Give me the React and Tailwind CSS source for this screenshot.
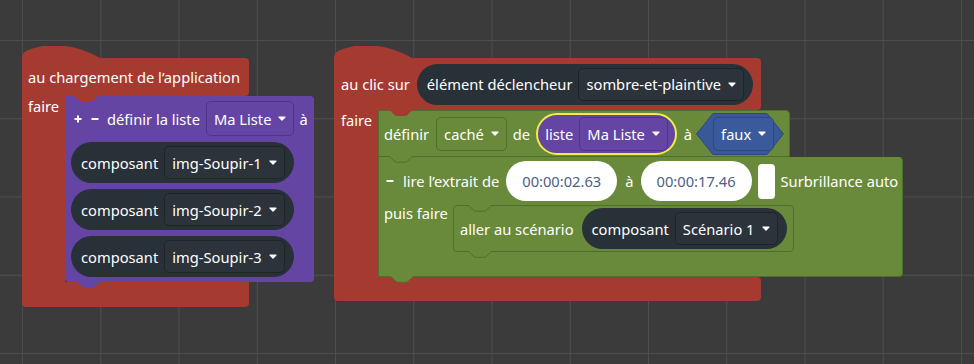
const FONT = "font-['Noto_Sans',sans-serif]";

function Arrow({ className = "" }) {
  return (
    <svg width="8" height="5" viewBox="0 0 8 5" className={`shrink-0 ${className}`}>
      <path d="M1 1h6L4 4.2z" fill="#fff" stroke="#fff" strokeWidth="1.2" strokeLinejoin="round" />
    </svg>
  );
}

const TONES = {
  pill: "bg-[#2c333a] border-[#1e2428]",
  purple: "bg-[#6445a4] border-[#4e3489]",
  green: "bg-[#688a3a] border-[#506e2b]",
  blue: "bg-[#3a5a9b] border-[#2b4882]",
};

function Dropdown({ label, tone = "pill", h = "h-[34px]", className = "" }) {
  return (
    <div className={`flex items-center ${h} pl-[7px] pr-[7px] rounded-[5px] border ${TONES[tone]} ${className}`}>
      <span>{label}</span>
      <Arrow className="ml-[7px]" />
    </div>
  );
}

// connection notch / tab, drawn over the block edge
function Notch({ fill, stroke, className = "" }) {
  return (
    <svg width="28" height="7" viewBox="0 0 28 7" className={`absolute z-10 ${className}`}>
      <path
        d="M0 0H28C25.5 0 24.5 0.8 23.5 1.8L20.7 4.8C19.8 5.7 18.8 6 17.5 6H10.5C9.2 6 8.2 5.7 7.3 4.8L4.5 1.8C3.5 0.8 2.5 0 0 0Z"
        fill={fill}
      />
      {stroke && (
        <path
          d="M0 0.5C2.5 0.5 3.5 1.2 4.5 2.2L7.3 5.1C8.2 6 9.2 6.3 10.5 6.3H17.5C18.8 6.3 19.8 6 20.7 5.1L23.5 2.2C24.5 1.2 25.5 0.5 28 0.5"
          fill="none"
          stroke={stroke}
          strokeWidth="1"
        />
      )}
    </svg>
  );
}

function Hat() {
  return (
    <svg width="78" height="12" viewBox="0 0 78 12" className="block">
      <path d="M0 12C0 8 2 6 4 5C24 -4 52 -3 78 12Z" fill="#a53a31" />
    </svg>
  );
}

function PlusIcon({ className = "" }) {
  return (
    <svg width="8" height="8" viewBox="0 0 8 8" className={`shrink-0 ${className}`}>
      <path d="M4 0.5V7.5M0.5 4H7.5" stroke="#fff" strokeWidth="2" />
    </svg>
  );
}

function MinusIcon({ className = "" }) {
  return (
    <svg width="8" height="8" viewBox="0 0 8 8" className={`shrink-0 ${className}`}>
      <path d="M0.5 4H7.5" stroke="#fff" strokeWidth="2" />
    </svg>
  );
}

function Pill({ label, value, className = "" }) {
  return (
    <div className={`h-[41px] flex items-center rounded-full bg-[#283038] pl-[10px] pr-[9px] whitespace-nowrap ${className}`}>
      <span>{label}</span>
      <Dropdown label={value} tone="pill" h="h-[33px]" className="ml-[6px]" />
    </div>
  );
}

function Oval({ children, className = "" }) {
  return (
    <div className={`h-[40px] flex items-center rounded-full bg-white px-[16px] text-[#4e6083] ${className}`}>
      {children}
    </div>
  );
}

function Hexagon({ className = "" }) {
  return (
    <div className={`relative w-[88px] h-[42px] flex items-center pl-[17px] ${className}`}>
      <svg className="absolute inset-0" width="88" height="42" viewBox="0 0 88 42">
        <polygon
          points="0.6,21 17,0.5 71,0.5 87.4,21 71,41.5 17,41.5"
          fill="#395898"
          stroke="#2b4882"
          strokeWidth="1"
          strokeLinejoin="round"
        />
      </svg>
      <Dropdown label="faux" tone="blue" className="relative" />
    </div>
  );
}

function LoadBlock() {
  return (
    <div className="absolute left-[22px] top-[46px] flex flex-col items-start">
      <Hat />
      <div className="w-[227px] h-[38px] bg-[#a53a31] rounded-tr-[4px] rounded-br-[4px] flex items-center pl-[6px] whitespace-nowrap">
        au chargement de l’application
      </div>
      <div className="flex">
        <div className="w-[43px] bg-[#a53a31] pl-[6px]">faire</div>
        <div className="relative bg-[#6445a4] rounded-tr-[4px] rounded-br-[4px] rounded-bl-[4px] pt-[5px] pb-[5px] pl-[6px] pr-[6px] flex flex-col items-start gap-[6px]">
          <Notch fill="#a53a31" className="left-[7px] top-0" />
          <div className="h-[35px] flex items-center whitespace-nowrap">
            <PlusIcon className="ml-[3px]" />
            <MinusIcon className="ml-[9px]" />
            <span className="ml-[8px]">définir la liste</span>
            <Dropdown label="Ma Liste" tone="purple" h="h-[35px]" className="ml-[6px]" />
            <span className="ml-[5px]">à</span>
          </div>
          <Pill label="composant" value="img-Soupir-1" />
          <Pill label="composant" value="img-Soupir-2" />
          <Pill label="composant" value="img-Soupir-3" />
          <Notch fill="#6445a4" className="left-[10px] top-full" />
        </div>
      </div>
      <div className="w-[227px] h-[25px] bg-[#a53a31] rounded-b-[4px]" />
    </div>
  );
}

function ClickBlock() {
  return (
    <div className="absolute left-[334px] top-[46px] flex flex-col items-start">
      <Hat />
      <div className="w-[427px] h-[52px] bg-[#a53a31] rounded-tr-[4px] rounded-br-[4px] flex items-center pl-[7px] whitespace-nowrap">
        <span>au clic sur</span>
        <Pill className="ml-[7px]" label="élément déclencheur" value="sombre-et-plaintive" />
      </div>
      <div className="flex">
        <div className="w-[44px] bg-[#a53a31] pl-[7px]">faire</div>
        <div className="flex flex-col items-start">
          {/* définir caché */}
          <div className="relative h-[47px] flex items-center pl-[5px] pr-[5px] bg-[#688a3a] border border-[#506e2b] rounded-tr-[4px] whitespace-nowrap">
            <Notch fill="#a53a31" className="left-[8px] -top-px" />
            <span>définir</span>
            <Dropdown label="caché" tone="green" className="ml-[7px]" />
            <span className="ml-[6px]">de</span>
            <div className="ml-[6px] h-[42px] flex items-center rounded-full border-2 border-[#f2ec48] bg-[#6445a4] pl-[7px] pr-[7px]">
              <span>liste</span>
              <Dropdown label="Ma Liste" tone="purple" className="ml-[6px]" />
            </div>
            <span className="ml-[7px]">à</span>
            <Hexagon className="ml-[4px]" />
            <Notch fill="#688a3a" stroke="#506e2b" className="left-[8px] top-full" />
          </div>

          {/* lire l'extrait */}
          <div className="relative w-[525px] flex flex-col bg-[#688a3a] border border-t-0 border-[#506e2b] rounded-tr-[4px] rounded-br-[4px]">
            <div className="h-[48px] flex items-center pl-[7px] whitespace-nowrap">
              <MinusIcon />
              <span className="ml-[9px]">lire l’extrait de</span>
              <Oval className="ml-[7px]">00:00:02.63</Oval>
              <span className="ml-[8px]">à</span>
              <Oval className="ml-[7px]">00:00:17.46</Oval>
              <div className="ml-[6px] w-[17px] h-[35px] rounded-[4px] bg-white" />
              <span className="ml-[6px]">Surbrillance auto</span>
            </div>
            <div className="flex">
              <div className="w-[74px] pl-[5px] leading-[16px] whitespace-nowrap">puis faire</div>
              <div className="relative h-[47px] flex items-center pl-[6px] pr-[6px] bg-[#688a3a] border border-[#506e2b] rounded-[4px] whitespace-nowrap">
                <Notch fill="#688a3a" stroke="#506e2b" className="left-[12px] -top-px" />
                <span>aller au scénario</span>
                <Pill className="ml-[8px]" label="composant" value="Scénario 1" />
                <Notch fill="#688a3a" stroke="#506e2b" className="left-[12px] top-full" />
              </div>
            </div>
            <div className="h-[24px]" />
            <Notch fill="#688a3a" stroke="#506e2b" className="left-[9px] top-full" />
          </div>
        </div>
      </div>
      <div className="w-[427px] h-[24px] bg-[#a53a31] rounded-b-[4px] rounded-tr-[4px]" />
    </div>
  );
}

export default function App() {
  return (
    <div
      className={`relative w-[974px] h-[364px] overflow-hidden bg-[#3b3b3b] bg-[linear-gradient(to_right,#4e4e4e_1px,transparent_1px),linear-gradient(to_bottom,#4e4e4e_1px,transparent_1px)] bg-[length:78.25px_78.25px] bg-[position:22px_40px] ${FONT} text-[14.7px] leading-[20px] text-white`}
    >
      <LoadBlock />
      <ClickBlock />
    </div>
  );
}
